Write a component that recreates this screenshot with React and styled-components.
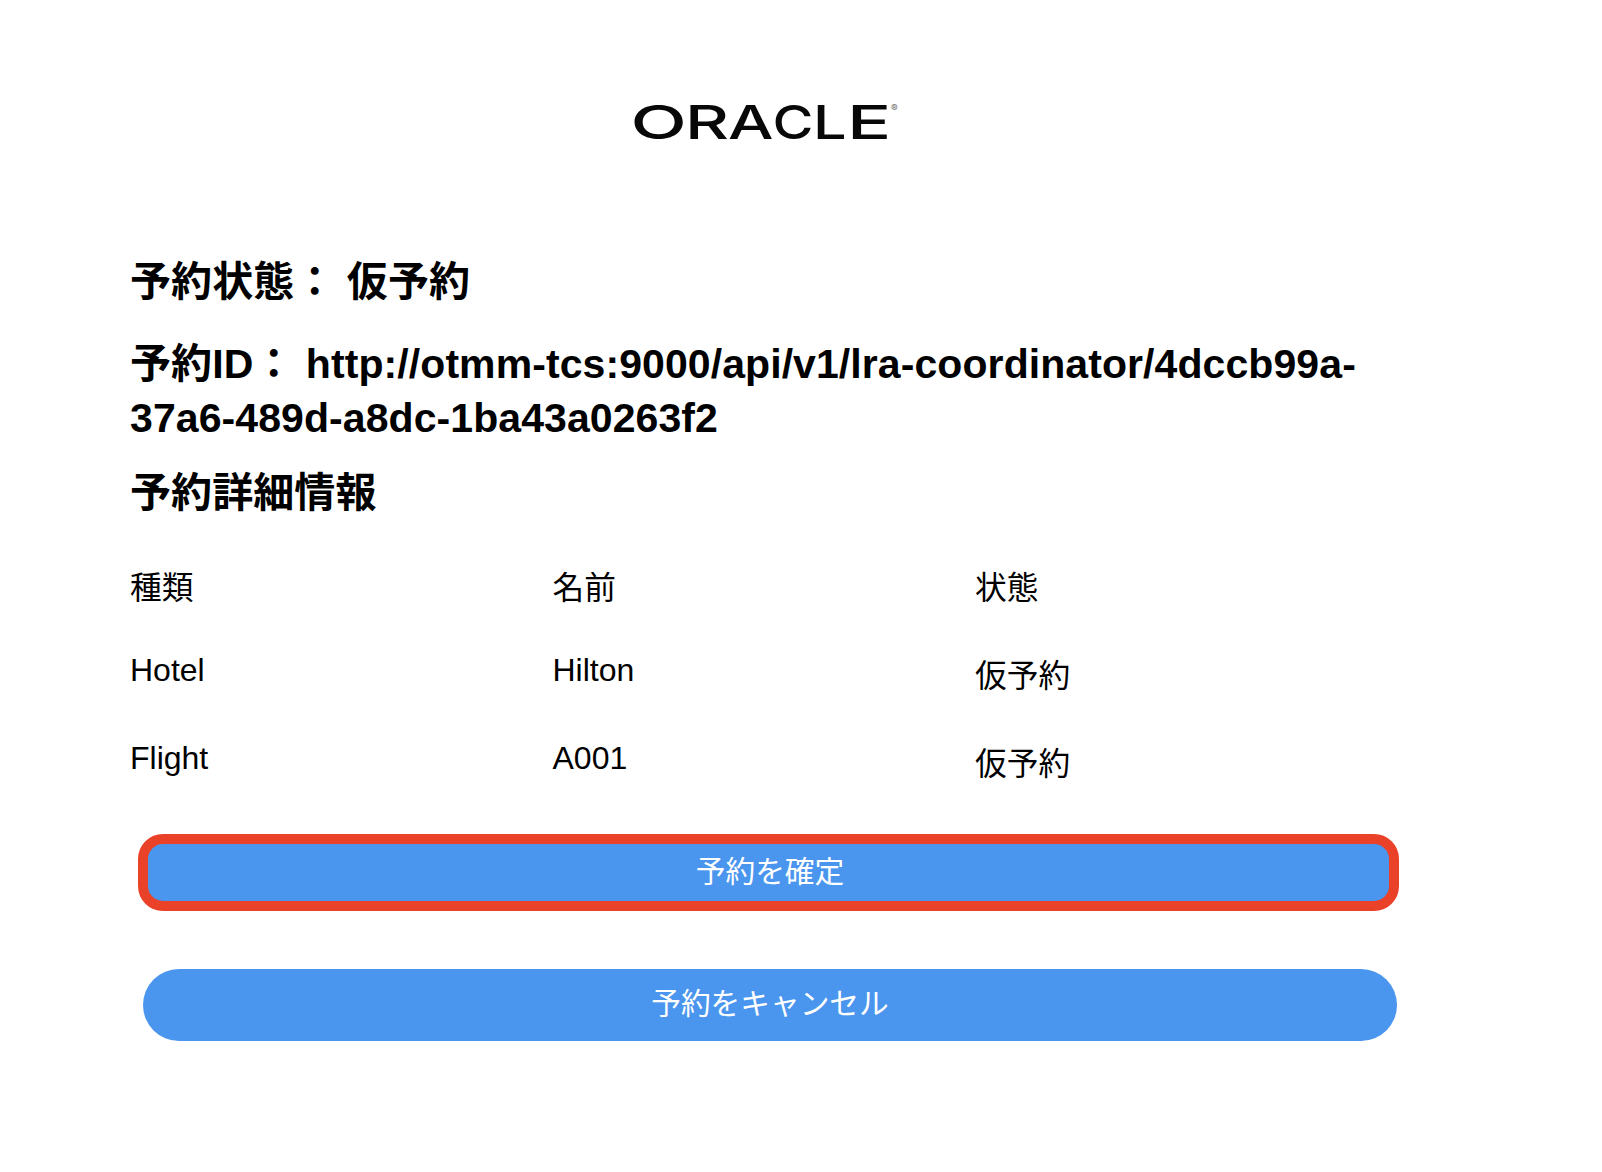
import React from "react";
import styled, { createGlobalStyle } from "styled-components";

const GlobalStyle = createGlobalStyle`
  * { box-sizing: border-box; }
  body {
    margin: 0;
    background: #fff;
    color: #000;
    font-family: "Liberation Sans", "Noto Sans CJK JP", sans-serif;
  }
`;

const Page = styled.main`
  display: flex;
  flex-direction: column;
  width: 1602px;
  height: 1172px;
  padding: 95px 202px 0 130px;
`;

const Logo = styled.svg`
  display: block;
  width: 280px;
  height: 54px;
  margin-left: 494px;
  flex: none;
`;

const Wordmark = styled.text`
  font: 500 46.5px Inter, sans-serif;
  fill: #080808;
`;

const Registered = styled.text`
  font: 700 10px Inter, sans-serif;
  fill: #777;
`;

const Heading = styled.h2`
  margin: 0 0 ${(p) => p.$gap}px;
  font-size: 41px;
  font-weight: 700;
  line-height: 54px;
  letter-spacing: 0.08px;
  white-space: pre-wrap;
`;

const Summary = styled.section`
  padding-top: 106px;
`;

const Details = styled.div`
  display: grid;
  grid-template-columns: 422.5px 422.5px 1fr;
  grid-template-rows: 82px 88px 88px;
  margin-top: 48px;
`;

const Cell = styled.div`
  padding-top: ${(p) => (p.$lowered ? 6 : 0)}px;
  font-size: ${(p) => (p.$latin ? 32 : 31.7)}px;
  line-height: 40px;
`;

const Actions = styled.div`
  display: flex;
  flex-direction: column;
  gap: 58px;
  margin-top: 8px;
`;

const Button = styled.button`
  display: block;
  width: ${(p) => (p.$highlighted ? 1261 : 1254)}px;
  height: ${(p) => (p.$highlighted ? 77 : 72)}px;
  margin-left: ${(p) => (p.$highlighted ? 8 : 13)}px;
  padding: 0 0 ${(p) => (p.$highlighted ? 1 : 2)}px ${(p) => (p.$highlighted ? 3 : 0)}px;
  border: ${(p) => (p.$highlighted ? "10px solid #ea4228" : "0")};
  border-radius: ${(p) => (p.$highlighted ? 25 : 36)}px;
  background: #4a95ed;
  color: #fff;
  font: 400 29.7px/40px "Liberation Sans", "Noto Sans CJK JP", sans-serif;
`;

/* The wordmark is extended by a different amount for each letter. */
const letters = [
  { char: "O", x: 6.5, stretch: 1.58 },
  { char: "R", x: 61, stretch: 1.46 },
  { char: "A", x: 104, stretch: 1.38 },
  { char: "C", x: 148.5, stretch: 1.2 },
  { char: "L", x: 189, stretch: 1.28 },
  { char: "E", x: 223, stretch: 1.58 },
];

const bookings = [
  ["Hotel", "Hilton", "仮予約"],
  ["Flight", "A001", "仮予約"],
];

export default function App() {
  return (
    <>
      <GlobalStyle />
      <Page>
        <Logo viewBox="0 0 280 54" role="img" aria-label="ORACLE">
          {letters.map(({ char, x, stretch }) => (
            <Wordmark key={char} transform={`translate(${x} 44) scale(${stretch} 1)`}>
              {char}
            </Wordmark>
          ))}
          <Registered x="267" y="17">®</Registered>
        </Logo>
        <Summary>
          <Heading $gap={28}>予約状態： 仮予約</Heading>
          <Heading $gap={21}>
            予約ID： http://otmm-tcs:9000/api/v1/lra-coordinator/4dccb99a-
            <br />
            37a6-489d-a8dc-1ba43a0263f2
          </Heading>
          <Heading $gap={0}>予約詳細情報</Heading>
        </Summary>
        <Details>
          <Cell>種類</Cell>
          <Cell>名前</Cell>
          <Cell>状態</Cell>
          {bookings.map(([kind, name, status]) => (
            <React.Fragment key={kind}>
              <Cell $latin>{kind}</Cell>
              <Cell $latin>{name}</Cell>
              <Cell $lowered>{status}</Cell>
            </React.Fragment>
          ))}
        </Details>
        <Actions>
          <Button $highlighted>予約を確定</Button>
          <Button>予約をキャンセル</Button>
        </Actions>
      </Page>
    </>
  );
}
